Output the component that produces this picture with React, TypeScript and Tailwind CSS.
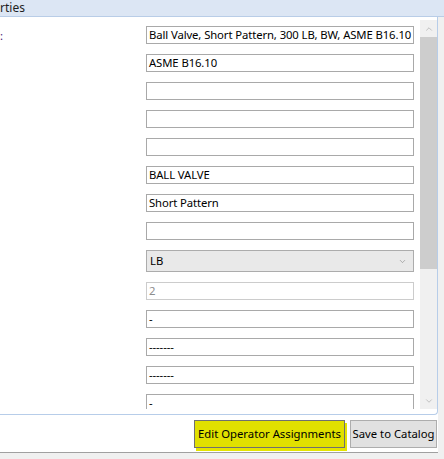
import { ChevronDown, ChevronUp } from "lucide-react";

const rows: { value: string; kind?: "select" | "disabled" }[] = [
    { value: "Ball Valve, Short Pattern, 300 LB, BW, ASME B16.10" },
    { value: "ASME B16.10" },
    { value: "" },
    { value: "" },
    { value: "" },
    { value: "BALL VALVE" },
    { value: "Short Pattern" },
    { value: "" },
    { value: "LB", kind: "select" },
    { value: "2", kind: "disabled" },
    { value: "-" },
    { value: "-------" },
    { value: "-------" },
    { value: "-" },
];

function Field({ value, kind }: { value: string; kind?: "select" | "disabled" }) {
    if (kind === "select") {
        return (
            <div className="flex h-[22px] w-[268px] shrink-0 items-center justify-between border border-[#acacac] bg-[#e9e9e9] pl-[3px] pr-[6px] text-black">
                <span className="whitespace-nowrap">{value}</span>
                <ChevronDown size={9} strokeWidth={1.5} className="text-[#808080]" />
            </div>
        );
    }
    return (
        <div
            className={`flex h-[18px] w-[268px] shrink-0 items-center overflow-hidden border bg-white pl-[2px] ${
                kind === "disabled" ? "border-[#cccccc] text-[#8d8d8d]" : "border-[#a9a9a9] text-black"
            }`}
        >
            <span className="whitespace-nowrap tracking-[-0.1px]">{value}</span>
        </div>
    );
}

export default function App() {
    return (
        <div className="flex h-[459px] w-[444px] flex-col overflow-hidden bg-[#f0f0f0] font-['Noto_Sans',sans-serif] text-[11.3px] leading-none">
            <div className="flex h-[17px] shrink-0 items-center border-b border-[#b9cde7] bg-[#dce6f4] text-[12px] text-[#1e1e1e]">
                <span className="-mt-[1px]">rties</span>
            </div>

            <div className="w-[438px] shrink-0 bg-white">
                <div className="flex h-[398px] rounded-br-[4px] border-r border-b border-[#b7cde9]">
                    <div className="flex h-[392px] flex-1 overflow-hidden">
                        <div className="w-[146px] shrink-0 pt-[13px] text-[#4b1a74]">:</div>
                        <div className="flex flex-col gap-[10px] pt-[9px]">
                            {rows.map((r, i) => (
                                <Field key={i} value={r.value} kind={r.kind} />
                            ))}
                        </div>
                    </div>
                    <div className="ml-[5px] mt-[3px] flex h-[389px] w-[17px] shrink-0 flex-col bg-[#f0f0f0]">
                        <div className="flex h-[17px] items-center justify-center">
                            <ChevronUp size={10} strokeWidth={1.5} className="text-[#a3a3a3]" />
                        </div>
                        <div className="h-[232px] bg-[#cdcdcd]" />
                        <div className="flex-1" />
                        <div className="flex h-[17px] items-center justify-center">
                            <ChevronDown size={10} strokeWidth={1.5} className="text-[#a3a3a3]" />
                        </div>
                    </div>
                </div>

                <div className="flex h-[38px] justify-end gap-[5px] border-b border-[#a0a0a0] pr-[1px] pt-[5px]">
                    <button className="h-[28px] w-[151px] whitespace-nowrap border border-[#707070] bg-[#e1e000] text-black shadow-[2px_3px_0_#e4e400]">
                        Edit Operator Assignments
                    </button>
                    <button className="h-[28px] w-[87px] whitespace-nowrap border border-[#adadad] bg-[#e1e1e1] text-black">
                        Save to Catalog
                    </button>
                </div>
            </div>
        </div>
    );
}
